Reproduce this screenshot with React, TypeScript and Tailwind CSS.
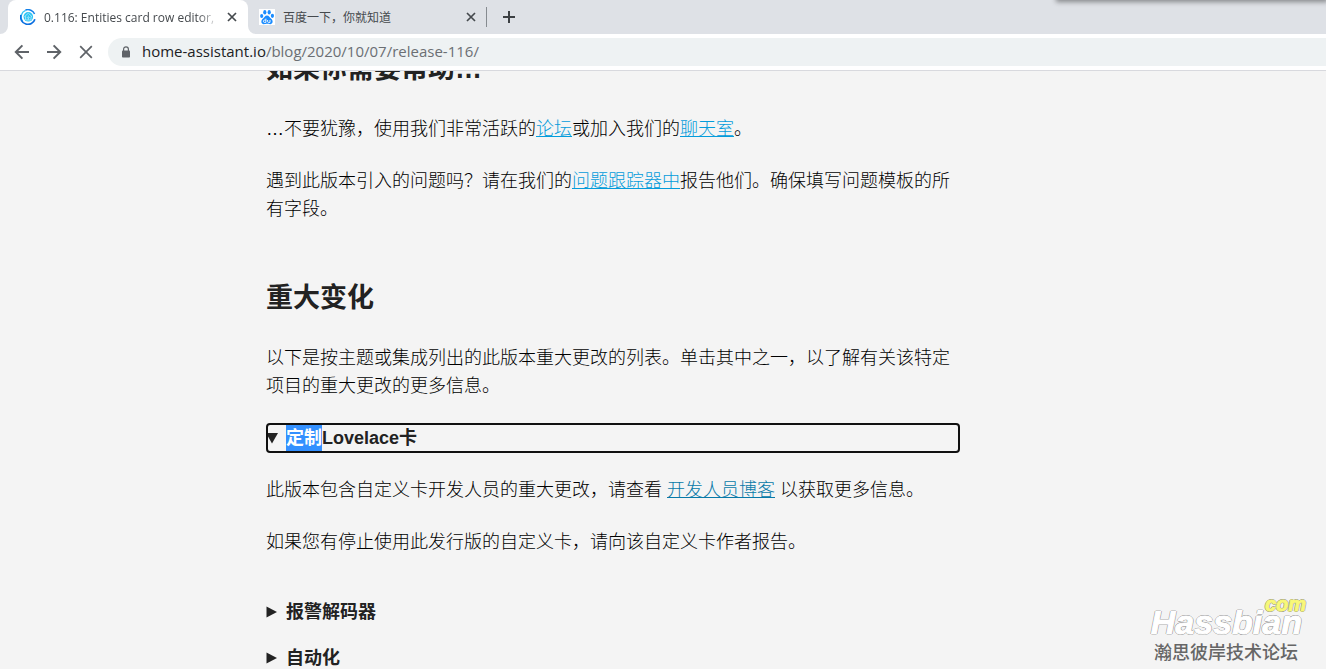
import { ReactNode } from "react";

const UI_FONT = "font-['Open_Sans','Noto_Sans_CJK_SC',sans-serif]";
const PAGE_FONT = "font-['Liberation_Sans','Noto_Sans_CJK_SC',sans-serif]";

function CloseIcon() {
  return (
    <svg viewBox="0 0 10 10" className="size-[10px]" stroke="#45494d" strokeWidth="1.7" aria-hidden="true">
      <path d="M1 1L9 9M9 1L1 9" />
    </svg>
  );
}

function AssistantFavicon() {
  return (
    <svg viewBox="0 0 16 16" className="size-4 shrink-0" fill="none" aria-hidden="true">
      <circle cx="8.3" cy="7.8" r="4.8" fill="#2cc4f3" />
      <path d="M8.3 4.2L12 7.6H11V11H5.6V7.6H4.6Z" stroke="#b9ecfb" strokeWidth="0.8" />
      <path d="M8.3 6.5V11M6.8 8L8.3 9.5L9.8 8" stroke="#b9ecfb" strokeWidth="0.7" />
      <path d="M5.6 1.4A7 7 0 0 0 2.6 12.2" stroke="#38c4f5" strokeWidth="1.4" />
      <path d="M1 6A7.2 7.2 0 0 0 14.9 10.2" stroke="#0b6fe0" strokeWidth="1.7" />
      <path d="M5.5 1A7.4 7.4 0 0 1 14.6 5" stroke="#1380ea" strokeWidth="1.5" />
    </svg>
  );
}

function BaiduFavicon() {
  return (
    <svg viewBox="0 0 16 16" className="size-4 shrink-0" aria-hidden="true">
      <rect width="16" height="16" fill="#fff" />
      <g fill="#1a8cff">
        <ellipse cx="2.7" cy="7" rx="1.6" ry="2.1" />
        <ellipse cx="5.8" cy="3.2" rx="1.6" ry="2.2" />
        <ellipse cx="10.2" cy="3.2" rx="1.6" ry="2.2" />
        <ellipse cx="13.4" cy="6.8" rx="1.6" ry="2.1" />
        <path d="M8 6.5C10.2 6.5 10.6 8.6 12.2 9.8C14.6 11.8 13.8 15.2 11.2 15.2C9.6 15.2 9.2 14.8 8 14.8S6.4 15.2 4.8 15.2C2.2 15.2 1.4 11.8 3.8 9.8C5.4 8.6 5.8 6.5 8 6.5Z" />
      </g>
      <path d="M6.9 9.6V13.4H5.3Q4.4 13.3 4.4 12.3T5.3 11.1H6.9M8.6 11V12.6Q8.7 13.4 9.6 13.4H11V11" fill="none" stroke="#fff" strokeWidth="0.9" />
    </svg>
  );
}

function TabStrip() {
  return (
    <div className="relative flex h-[34px] shrink-0 items-stretch bg-[#dee1e6] pl-2 text-xs text-[#45494d]">
      <div className="relative flex w-60 items-center rounded-t-lg bg-white pl-3 pr-[11px]">
        <svg viewBox="0 0 8 8" className="absolute -left-2 bottom-0 size-2" fill="#fff" aria-hidden="true">
          <path d="M8 0A8 8 0 0 1 0 8H8Z" />
        </svg>
        <svg viewBox="0 0 8 8" className="absolute -right-2 bottom-0 size-2" fill="#fff" aria-hidden="true">
          <path d="M0 0A8 8 0 0 0 8 8H0Z" />
        </svg>
        <AssistantFavicon />
        <span className="ml-2 mr-2 flex-1 overflow-hidden whitespace-nowrap pt-0.5 [mask-image:linear-gradient(to_right,#000_88%,transparent)]">
          0.116: Entities card row editor,
        </span>
        <button aria-label="Close tab">
          <CloseIcon />
        </button>
      </div>
      <div className="flex w-[238px] items-center pl-[11px] pr-[10px]">
        <BaiduFavicon />
        <span className="ml-2 flex-1 whitespace-nowrap pt-0.5">百度一下，你就知道</span>
        <button aria-label="Close tab">
          <CloseIcon />
        </button>
      </div>
      <div className="h-5 w-px self-center bg-[#868b90]" />
      <button aria-label="New tab" className="ml-4">
        <svg viewBox="0 0 12 12" className="size-3" stroke="#3c4043" strokeWidth="2" aria-hidden="true">
          <path d="M6 0V12M0 6H12" />
        </svg>
      </button>
      <div className="absolute -top-2 left-[1058px] right-0 h-2 shadow-[0_0_5px_2px_rgba(0,0,0,0.4)]" />
    </div>
  );
}

function Toolbar() {
  return (
    <div className="flex h-[37px] shrink-0 items-center border-b border-[#d8d9de] bg-white pl-[14px]">
      <div className="flex items-center gap-4 text-[#5f6368]">
        <button aria-label="Back">
          <svg viewBox="0 0 16 16" className="size-4" fill="none" stroke="currentColor" strokeWidth="2" aria-hidden="true">
            <path d="M15 8H2.2M8.4 1.4L1.8 8L8.4 14.6" />
          </svg>
        </button>
        <button aria-label="Forward">
          <svg viewBox="0 0 16 16" className="size-4" fill="none" stroke="currentColor" strokeWidth="2" aria-hidden="true">
            <path d="M1 8H13.8M7.6 1.4L14.2 8L7.6 14.6" />
          </svg>
        </button>
        <button aria-label="Stop">
          <svg viewBox="0 0 16 16" className="size-4" stroke="currentColor" strokeWidth="1.7" aria-hidden="true">
            <path d="M2.2 2.2L13.8 13.8M13.8 2.2L2.2 13.8" />
          </svg>
        </button>
      </div>
      <div className="ml-[14px] flex h-7 flex-1 items-center rounded-l-full bg-[#eef2f3] pl-[13px]">
        <svg viewBox="0 0 10 12" className="h-3 w-[10px]" aria-hidden="true">
          <path d="M2.6 5V3.2A2.4 2.4 0 0 1 7.4 3.2V5" fill="none" stroke="#5f6368" strokeWidth="1.2" />
          <rect x="1" y="4.4" width="8" height="7.2" rx="0.8" fill="#5f6368" />
        </svg>
        <p className="ml-[11px] whitespace-nowrap pb-0.5 text-[15px] leading-5 text-[#6b6f73]">
          <span className="text-[#202124]">home-assistant.io</span>/blog/2020/10/07/release-116/
        </p>
      </div>
    </div>
  );
}

function Link({ children, className = "text-[#049cdb]" }: { children: ReactNode; className?: string }) {
  return (
    <a href="#" className={`underline ${className}`}>
      {children}
    </a>
  );
}

function Marker({ open }: { open?: boolean }) {
  return (
    <svg viewBox="0 0 12 12" className="mr-2 size-3 shrink-0" fill="#222" aria-hidden="true">
      {open ? <path d="M0 1H12L6 11.5Z" /> : <path d="M0.5 0.5V11.5L11 6Z" />}
    </svg>
  );
}

function Watermark() {
  return (
    <div className="absolute bottom-1 right-6 flex flex-col items-end">
      <div className="relative font-bold italic leading-6 [text-shadow:1px_0_#888,-1px_0_#888,0_1px_#888,0_-1px_#888]">
        <span className="text-[34px] text-white [-webkit-text-stroke:1px_#fff]">Hassbian</span>
        <span className="absolute -right-1 -top-[18px] text-xl leading-6 text-[#f8f878] [-webkit-text-stroke:1px_#f8f878]">com</span>
      </div>
      <p className="pr-1 text-lg font-medium leading-6 text-[#666]">瀚思彼岸技术论坛</p>
    </div>
  );
}

export default function App() {
  return (
    <div className={`relative flex h-screen flex-col overflow-hidden bg-[#f4f4f4] ${PAGE_FONT}`}>
      <header className={`z-10 ${UI_FONT}`}>
        <TabStrip />
        <Toolbar />
      </header>

      <main className="mx-auto -mt-5 w-full max-w-[794px] pr-[100px] text-lg font-light leading-7 text-black">
        <h2 className="mb-7 text-[27px] font-bold leading-9 text-[#222]">如果你需要帮助…</h2>
        <p className="mb-6">
          …不要犹豫，使用我们非常活跃的<Link>论坛</Link>或加入我们的<Link>聊天室</Link>。
        </p>
        <p>
          遇到此版本引入的问题吗？请在我们的<Link>问题跟踪器中</Link>报告他们。确保填写问题模板的所有字段。
        </p>

        <h2 className="mb-7 mt-14 pt-px text-[27px] font-bold leading-9 text-[#222]">重大变化</h2>
        <p className="mb-6">
          以下是按主题或集成列出的此版本重大更改的列表。单击其中之一，以了解有关该特定项目的重大更改的更多信息。
        </p>

        <details open className="mb-[42px]">
          <summary className="-mt-px mb-[23px] flex items-center rounded-sm py-px font-bold text-[#222] outline-2 -outline-offset-2 outline-[#101010]">
            <Marker open />
            <span className="bg-[#3390ff] text-white">定制</span>Lovelace卡
          </summary>
          <p className="mb-6">
            此版本包含自定义卡开发人员的重大更改，请查看 <Link className="text-[#0779a8]">开发人员博客</Link> 以获取更多信息。
          </p>
          <p>如果您有停止使用此发行版的自定义卡，请向该自定义卡作者报告。</p>
        </details>
        {["报警解码器", "自动化"].map((title) => (
          <details key={title} className="mb-[18px]">
            <summary className="flex items-center font-bold text-[#222]">
              <Marker />
              {title}
            </summary>
          </details>
        ))}
      </main>

      <Watermark />
    </div>
  );
}
